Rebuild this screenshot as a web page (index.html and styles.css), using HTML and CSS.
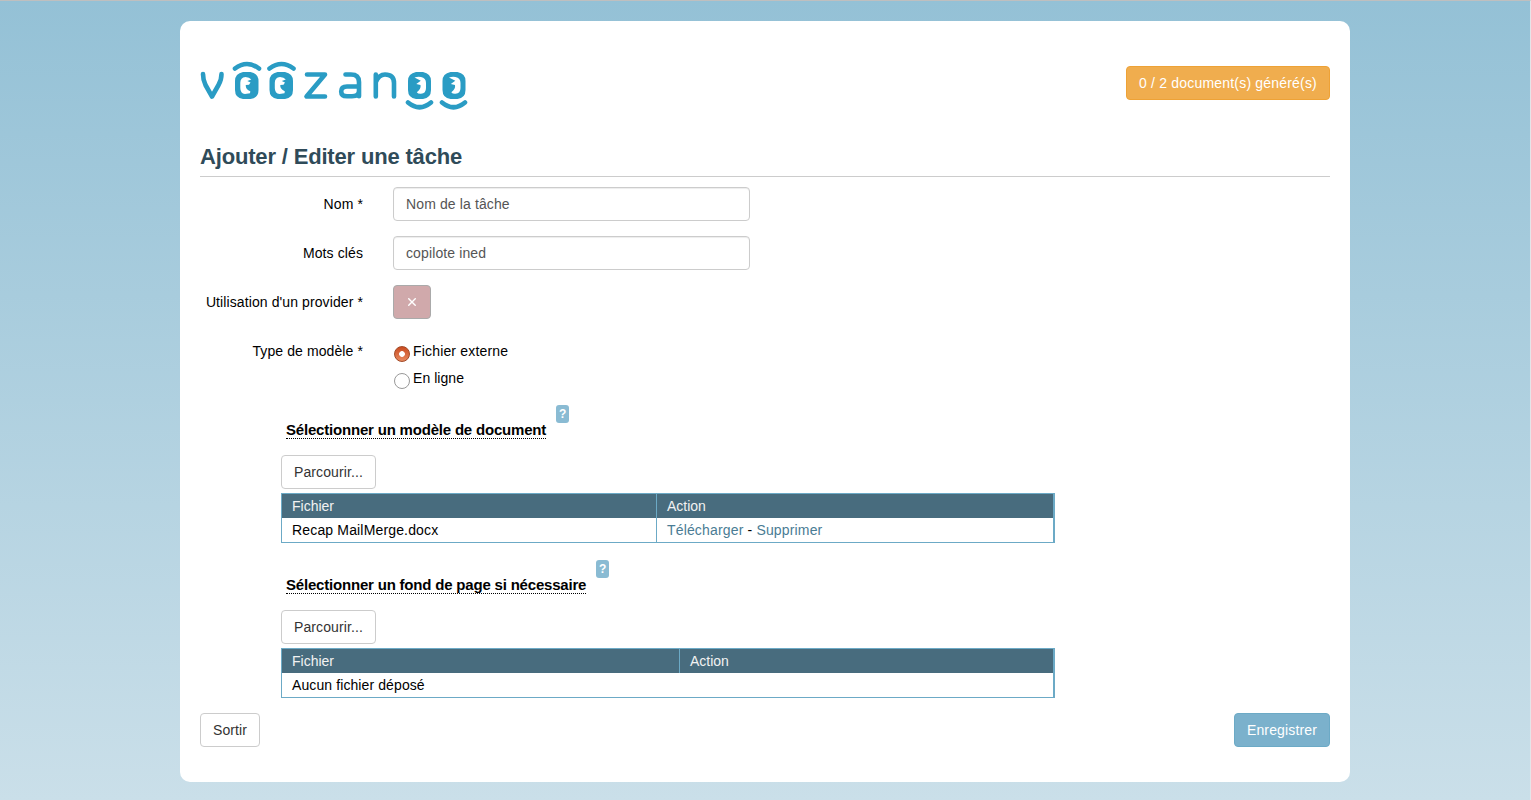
FILE: index.html
```
<!DOCTYPE html>
<html lang="fr">
<head>
<meta charset="utf-8">
<title>Voozanoo</title>
<link rel="stylesheet" href="styles.css">
</head>
<body>
<main class="page">
  <header class="header">
    <svg class="logo" viewBox="200 60 270 52" role="img" aria-label="voozanoo">
      <g class="logo-line">
        <path d="M203 74 Q203 80 205.500 85 L212 96.500 L218.500 85 Q221.500 80 221.500 74"/>
        <path d="M307 74.500 H325 L306.500 96.500 H325"/>
        <path d="M345.500 74.500 H351 Q359 74.500 359 82 V96.300 M359 86.500 H347 Q341.200 86.500 341.200 91.500 Q341.200 96.300 347 96.300 H352 Q359 96.300 359 91"/>
        <path d="M375.800 74.500 V96.500 M375.800 82 Q379 74.500 385 74.500 Q394 74.500 394 83 V96.500"/>
        <path d="M235 68.500 Q247 59.500 259 68.500 M269.500 68.500 Q281.500 59.500 293.500 68.500"/>
        <path d="M408 102.500 Q419.500 112 431 102.500 M442 102.500 Q453.500 112 465 102.500"/>
      </g>
      <g class="logo-eye">
        <path id="eye-left" fill-rule="evenodd" d="M243 72H250.500Q258.500 73.500 258.500 81V90Q258.500 98 250.500 99H243Q235 98 235 90V81Q235 73.500 243 72ZM245.500 77Q240.300 77.500 240.300 83V88Q240.300 93.500 245 94L250 93.200L250.300 91.300Q245.300 89 245.800 85L249 84.700L250.500 82.500L247.300 81L251.300 79.500Q249.500 77 245.500 77Z"/>
        <use href="#eye-left" x="34.500"/>
        <path id="eye-right" fill-rule="evenodd" d="M416 72H423Q431 73.500 431 81V90Q431 98 423 99H416Q408 98 408 90V81Q408 73.500 416 72ZM414.500 77.500L420.800 80.700L416.300 84L420.500 85Q421.300 89 416.800 92.300Q418 94 421 93.800Q426 93.500 426 88V83Q426 78 421 77Q417.500 76.500 414.500 77.500Z"/>
        <use href="#eye-right" x="34.500"/>
      </g>
    </svg>
    <span class="btn btn-warning">0 / 2 document(s) généré(s)</span>
  </header>
  <h1 class="title">Ajouter / Editer une tâche</h1>
  <form class="form">
    <div class="row">
      <label class="label" for="name">Nom *</label>
      <input class="input" id="name" type="text" value="Nom de la tâche">
    </div>
    <div class="row">
      <label class="label" for="tags">Mots clés</label>
      <input class="input" id="tags" type="text" value="copilote ined">
    </div>
    <div class="row">
      <span class="label">Utilisation d'un provider *</span>
      <button class="btn btn-toggle" type="button" aria-label="Non"><svg class="cross" viewBox="0 0 8 8"><path d="M0.300 0.300 L7.700 7.700 M7.700 0.300 L0.300 7.700"/></svg></button>
    </div>
    <div class="row row-radios">
      <span class="label">Type de modèle *</span>
      <div class="radios">
        <label class="radio"><span class="dot dot-on"></span>Fichier externe</label>
        <label class="radio radio-tight"><span class="dot"></span>En ligne</label>
      </div>
    </div>
    <section class="upload">
      <div class="heading"><h2 class="subtitle">Sélectionner un modèle de document</h2><span class="help">?</span></div>
      <button class="btn" type="button">Parcourir...</button>
      <div class="table table-model">
        <div class="cell head">Fichier</div><div class="cell head">Action</div>
        <div class="cell">Recap MailMerge.docx</div><div class="cell"><a class="link">Télécharger</a> - <a class="link">Supprimer</a></div>
      </div>
    </section>
    <section class="upload">
      <div class="heading"><h2 class="subtitle">Sélectionner un fond de page si nécessaire</h2><span class="help">?</span></div>
      <button class="btn" type="button">Parcourir...</button>
      <div class="table table-background">
        <div class="cell head">Fichier</div><div class="cell head">Action</div>
        <div class="cell wide">Aucun fichier déposé</div>
      </div>
    </section>
    <footer class="footer">
      <button class="btn" type="button">Sortir</button>
      <button class="btn btn-primary" type="button">Enregistrer</button>
    </footer>
  </form>
</main>
</body>
</html>
```
FILE: styles.css
```
* { box-sizing: border-box; }

body {
  margin: 0;
  height: 800px;
  padding: 20px 180px 0;
  border-top: 1px solid #bfbfbf;
  border-right: 1px solid #e4e4e8;
  overflow: hidden;
  background: linear-gradient(#94c1d6, #cadfe9);
  color: #000;
  font: 14px/20px "Liberation Sans", Arial, sans-serif;
}

.page {
  width: 1170px;
  height: 761px;
  padding: 39px 20px 0;
  border-radius: 10px;
  background: #fff;
}

.header {
  display: flex;
  justify-content: space-between;
  align-items: flex-start;
  height: 84px;
}

.logo { width: 270px; height: 52px; }
.logo-line {
  fill: none;
  stroke: #2a9cc4;
  stroke-width: 4.6;
  stroke-linecap: round;
  stroke-linejoin: round;
}
.logo-eye { fill: #2a9cc4; }

.btn {
  display: inline-flex;
  align-items: center;
  justify-content: center;
  height: 34px;
  padding: 0 12px;
  border: 1px solid #ccc;
  border-radius: 4px;
  background: #fff;
  color: #333;
  font: inherit;
  letter-spacing: 0.1px;
  white-space: nowrap;
}
.btn-warning {
  width: 204px;
  margin-top: 6px;
  border-color: #eea236;
  background: #f0ad4e;
  color: #fff;
  letter-spacing: 0.19px;
}
.btn-toggle {
  width: 38px;
  border-color: #aaa;
  background: #d0a9ab;
}
.btn-primary {
  width: 96px;
  border-color: #6caac6;
  background: #7bb1cc;
  color: #fff;
  letter-spacing: 0.15px;
}

.cross { width: 8px; height: 8px; stroke: #fff; stroke-width: 1.4; }

.title {
  height: 33px;
  margin: 0 0 10px;
  border-bottom: 1px solid #ccc;
  color: #2f4b59;
  font-size: 22px;
  line-height: 26px;
  letter-spacing: -0.17px;
}

.row { display: flex; gap: 30px; height: 34px; margin-bottom: 15px; }
.label {
  width: 163px;
  padding-top: 7px;
  letter-spacing: 0.1px;
  text-align: right;
  white-space: nowrap;
}
.input {
  width: 357px;
  height: 34px;
  padding: 0 12px;
  border: 1px solid #ccc;
  border-radius: 4px;
  box-shadow: inset 0 1px 1px rgba(0, 0, 0, 0.075);
  color: #555;
  font: inherit;
  letter-spacing: 0.12px;
}

.row-radios { height: 71px; margin-bottom: 0; }
.radios { display: grid; grid-auto-rows: 27px; padding-top: 7px; }
.radio { display: flex; gap: 3px; padding-left: 1px; letter-spacing: 0.17px; }
.radio-tight { letter-spacing: 0.05px; }
.dot {
  width: 16px;
  height: 16px;
  margin-top: 5px;
  border: 1px solid #999;
  border-radius: 50%;
  background: #fff;
}
.dot-on {
  border-color: #a24926;
  background: radial-gradient(circle, #fff 2.5px, transparent 3.2px), linear-gradient(#c94b20, #e88a5f);
}

.upload { width: 774px; height: 155px; margin-left: 81px; }
.heading { display: flex; height: 50px; padding-left: 5px; }
.subtitle {
  height: 18px;
  margin: 16px 0 0;
  border-bottom: 1px dotted #000;
  font-size: 15px;
  line-height: 18px;
  letter-spacing: -0.195px;
}
.help {
  width: 13px;
  height: 18px;
  margin-left: 10px;
  border-radius: 3px;
  background: #8abbd3;
  color: #fff;
  font-size: 12px;
  font-weight: bold;
  line-height: 18px;
  text-align: center;
}

.table {
  display: grid;
  grid-template-rows: 24px 24px;
  width: 774px;
  height: 50px;
  margin-top: 4px;
  border: 1px solid #6caac6;
  border-right-width: 2px;
}
.table-model { grid-template-columns: 375px 1fr; }
.table-background { grid-template-columns: 398px 1fr; }
.cell { padding-left: 10px; line-height: 24px; letter-spacing: 0.16px; }
.cell:nth-child(odd) { border-right: 1px solid #6caac6; }
.head { background: #486c7e; color: #f2f2f2; letter-spacing: 0; }
.cell.wide { grid-column: 1 / -1; border-right: 0; letter-spacing: 0.1px; }
.link { color: #4a7c94; }

.footer { display: flex; justify-content: space-between; margin-top: -2px; }
```
